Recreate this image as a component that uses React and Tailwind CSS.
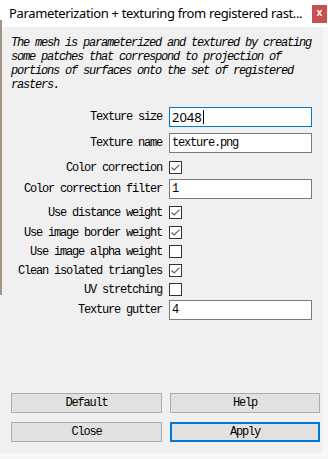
import { useState } from "react";

const mono = { fontFamily: '"Liberation Mono", "DejaVu Sans Mono", monospace' };

// one row of the form: label on the left, control on the right
const Row = ({ label, className, children }) => (
    <div className={`flex items-center gap-[7px] ${className}`}>
        <div className="w-[160px] shrink-0 text-right text-[12px] tracking-[-1.2px] text-black leading-none whitespace-nowrap" style={mono}>
            {label}
        </div>
        {children}
    </div>
);

const Field = ({ value, focused, sans }) => (
    <div
        className={`w-[143px] h-[20px] bg-white border flex items-center pl-[2px] text-black ${
            focused ? "border-[#0078d7]" : "border-[#7a7a7a]"
        }`}
    >
        {sans ? (
            <span className="text-[13px] leading-none" style={{ fontFamily: '"Noto Sans", sans-serif' }}>
                {value}
            </span>
        ) : (
            <span className="text-[12px] tracking-[-1.2px] leading-none" style={mono}>
                {value}
            </span>
        )}
        {focused && <span className="w-[1px] h-[14px] bg-black ml-[1px]" />}
    </div>
);

const Check = ({ checked }) => (
    <div className="w-[13px] h-[13px] bg-white border border-[#333333] flex items-center justify-center">
        {checked && (
            <svg width="9" height="7" viewBox="0 0 9 7">
                <path d="M0.5 3.5 L3.2 6 L8.5 0.7" fill="none" stroke="#5a5a5a" strokeWidth="1.1" />
            </svg>
        )}
    </div>
);

const Button = ({ children, active }) => (
    <button
        className={`h-[20px] bg-[#e1e1e1] text-[12px] tracking-[-1.2px] text-black leading-none ${
            active ? "border-2 border-[#0078d7]" : "border border-[#adadad]"
        }`}
        style={mono}
    >
        {children}
    </button>
);

export default function App() {
    const [opts] = useState({
        colorCorrection: true,
        distance: true,
        border: true,
        alpha: false,
        clean: true,
        uv: false,
    });

    return (
        <div className="w-[328px] h-[459px] bg-[#f7f7f7] flex overflow-hidden">
            {/* bit of the window behind */}
            <div className="w-[2px] h-[453px] flex flex-col">
                <div className="h-[20px] bg-white" />
                <div className="h-[275px] bg-[#a39585]" />
                <div className="flex-1 bg-[#f0f0f0]" />
            </div>

            <div className="w-[326px] flex flex-col">
                {/* Title bar */}
                <div className="h-[27px] bg-white flex items-start pl-[7px]">
                    <span
                        className="mt-[5px] min-w-0 text-[13px] text-black whitespace-nowrap tracking-[-0.35px] leading-[17px]"
                        style={{ fontFamily: '"Noto Sans", sans-serif' }}
                    >
                        Parameterization + texturing from registered rast...
                    </span>
                    <div className="ml-auto mr-[1px] shrink-0 mt-[5px] w-[15px] h-[18px] bg-[#c75050] flex items-center justify-center text-white text-[10px] font-bold leading-none" style={mono}>
                        x
                    </div>
                </div>

                {/* Body */}
                <div className="w-[321px] h-[426px] bg-[#f0f0f0] flex flex-col">
                    <p className="pl-[9px] pr-[4px] pt-[9px] text-[12px] italic tracking-[-1.2px] leading-[14px] text-black" style={mono}>
                        The mesh is parameterized and textured by creating some patches that correspond to projection of portions of
                        surfaces onto the set of registered rasters.
                    </p>

                    <div className="flex flex-col mt-[15px]">
                        <Row label="Texture size">
                            <Field value="2048" focused sans />
                        </Row>
                        <Row label="Texture name" className="mt-[6px]">
                            <Field value="texture.png" />
                        </Row>
                        <Row label="Color correction" className="mt-[8px]">
                            <Check checked={opts.colorCorrection} />
                        </Row>
                        <Row label="Color correction filter" className="mt-[5px]">
                            <Field value="1" />
                        </Row>
                        <Row label="Use distance weight" className="mt-[7px]">
                            <Check checked={opts.distance} />
                        </Row>
                        <Row label="Use image border weight" className="mt-[7px]">
                            <Check checked={opts.border} />
                        </Row>
                        <Row label="Use image alpha weight" className="mt-[6px]">
                            <Check checked={opts.alpha} />
                        </Row>
                        <Row label="Clean isolated triangles" className="mt-[6px]">
                            <Check checked={opts.clean} />
                        </Row>
                        <Row label="UV stretching" className="mt-[6px]">
                            <Check checked={opts.uv} />
                        </Row>
                        <Row label="Texture gutter" className="mt-[4px]">
                            <Field value="4" />
                        </Row>
                    </div>

                    {/* Buttons */}
                    <div className="mt-auto mb-[11px] pl-[9px] grid grid-cols-[151px_150px] gap-x-[8px] gap-y-[9px]">
                        <Button>Default</Button>
                        <Button>Help</Button>
                        <Button>Close</Button>
                        <Button active>Apply</Button>
                    </div>
                </div>
            </div>
        </div>
    );
}
